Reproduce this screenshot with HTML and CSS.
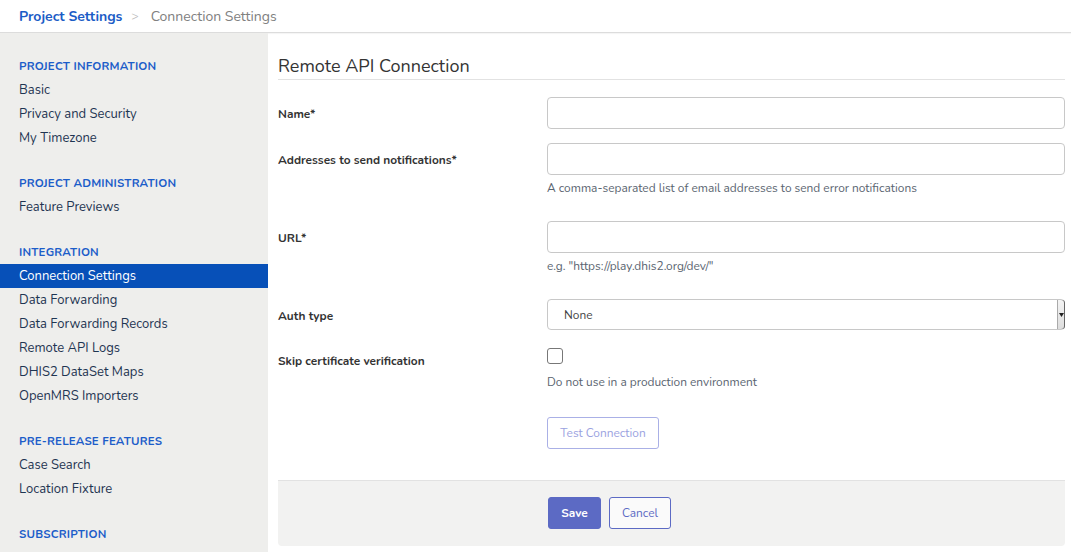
FILE: index.html
```html
<!DOCTYPE html>
<html>
<head>
<meta charset="utf-8">
<link rel="stylesheet" href="styles.css">
</head>
<body>
<header class="topbar">
  <a class="crumb-root">Project Settings</a>
  <span class="crumb-sep">&gt;</span>
  <span class="crumb-current">Connection Settings</span>
</header>
<div class="layout">
  <nav class="sidebar">
    <div class="nav-section">
      <div class="nav-heading">Project Information</div>
      <a class="nav-item">Basic</a>
      <a class="nav-item">Privacy and Security</a>
      <a class="nav-item">My Timezone</a>
    </div>
    <div class="nav-section">
      <div class="nav-heading">Project Administration</div>
      <a class="nav-item">Feature Previews</a>
    </div>
    <div class="nav-section">
      <div class="nav-heading">Integration</div>
      <a class="nav-item active">Connection Settings</a>
      <a class="nav-item">Data Forwarding</a>
      <a class="nav-item">Data Forwarding Records</a>
      <a class="nav-item">Remote API Logs</a>
      <a class="nav-item">DHIS2 DataSet Maps</a>
      <a class="nav-item">OpenMRS Importers</a>
    </div>
    <div class="nav-section">
      <div class="nav-heading">Pre-release Features</div>
      <a class="nav-item">Case Search</a>
      <a class="nav-item">Location Fixture</a>
    </div>
    <div class="nav-section">
      <div class="nav-heading">Subscription</div>
    </div>
  </nav>
  <main class="content">
    <h2 class="legend">Remote API Connection</h2>
    <div class="form-row">
      <label class="form-label">Name*</label>
      <div class="form-field"><input class="text-input" type="text"></div>
    </div>
    <div class="form-row">
      <label class="form-label">Addresses to send notifications*</label>
      <div class="form-field">
        <input class="text-input" type="text">
        <div class="help">A comma-separated list of email addresses to send error notifications</div>
      </div>
    </div>
    <div class="form-row">
      <label class="form-label">URL*</label>
      <div class="form-field">
        <input class="text-input" type="text">
        <div class="help">e.g. "https://play.dhis2.org/dev/"</div>
      </div>
    </div>
    <div class="form-row">
      <label class="form-label">Auth type</label>
      <div class="form-field">
        <div class="select">
          <span class="select-value">None</span>
          <span class="select-arrow"><svg width="5" height="4" viewBox="0 0 5 4"><path d="M0 0H5L2.5 4Z" fill="#222"/></svg></span>
        </div>
      </div>
    </div>
    <div class="form-row row-check">
      <label class="form-label">Skip certificate verification</label>
      <div class="form-field">
        <span class="checkbox"></span>
        <div class="help help-check">Do not use in a production environment</div>
      </div>
    </div>
    <div class="form-row row-test">
      <div class="form-label"></div>
      <div class="form-field"><button class="btn btn-outline-muted">Test Connection</button></div>
    </div>
    <div class="form-actions">
      <div class="form-label"></div>
      <div class="actions-buttons">
        <button class="btn btn-primary">Save</button>
        <button class="btn btn-outline">Cancel</button>
      </div>
    </div>
  </main>
</div>
</body>
</html>
```
FILE: styles.css
```css
* { box-sizing: border-box; }
html, body { margin: 0; padding: 0; }
body {
  font-family: "Nunito", "Lato", "Noto Sans", sans-serif;
  color: #333;
  background: #fff;
  width: 1071px;
  height: 552px;
  overflow: hidden;
}
.topbar {
  height: 33px;
  border-bottom: 1px solid #dcdcdc;
  display: flex;
  align-items: center;
  padding: 0 19px;
  font-size: 14px;
  box-shadow: 0 1px 1px rgba(0,0,0,0.04);
}
.crumb-root { color: #1b5cc6; font-weight: 700; }
.crumb-sep { color: #bbb; margin: 0 12px 0 9px; font-size: 12px; }
.crumb-current { color: #808080; }
.layout { display: flex; height: 519px; }
.sidebar {
  width: 268px;
  flex: none;
  background: #eeeeec;
  padding-top: 21px;
}
.nav-section { margin-bottom: 21px; }
.nav-heading {
  height: 24px;
  line-height: 24px;
  padding-left: 19px;
  font-size: 11.5px;
  font-weight: 700;
  text-transform: uppercase;
  color: #1c5dc9;
  letter-spacing: 0.2px;
}
.nav-item {
  display: block;
  height: 24px;
  line-height: 25px;
  padding-left: 19px;
  font-size: 13px;
  color: #1f3552;
}
.nav-item.active { background: #0750b8; color: #fff; }
.content {
  flex: 1;
  padding: 22px 6px 0 10px;
}
.legend {
  margin: 0;
  font-size: 18px;
  font-weight: 400;
  color: #333;
  line-height: 22px;
  padding-bottom: 2px;
  border-bottom: 1px solid #e2e2e2;
  margin-bottom: 17px;
}
.form-row { display: flex; margin-bottom: 14px; }
.form-label {
  width: 269px;
  flex: none;
  font-size: 11.9px;
  font-weight: 700;
  color: #333;
  height: 32px;
  line-height: 30px;
  padding-top: 2px;
}
.form-field { flex: 1; }
.text-input {
  display: block;
  width: 100%;
  height: 32px;
  border: 1px solid #c8c8c8;
  border-radius: 4px;
  background: #fff;
  margin: 0;
}
.help {
  font-size: 11.9px;
  color: #5a6470;
  margin-top: 5px;
  line-height: 17px;
  margin-bottom: 10px;
}
.select {
  height: 31px;
  border: 1px solid #c8c8c8;
  border-radius: 4px;
  display: flex;
  align-items: center;
  justify-content: space-between;
  font-size: 11.9px;
  color: #444;
  padding-left: 16px;
}
.select-arrow {
  width: 8px;
  height: 29px;
  border-left: 1px solid #aaa;
  background: linear-gradient(#f4f4f4, #ddd);
  display: flex;
  align-items: center;
  justify-content: center;
  border-radius: 0 3px 3px 0;
  margin-right: -1px;
  box-shadow: inset -1px 0 0 #666;
}
.row-check .form-label { height: auto; line-height: 16px; padding-top: 8px; }
.row-check { margin-bottom: 26px; }
.checkbox {
  display: block;
  width: 16px;
  height: 16px;
  border: 1px solid #777;
  border-radius: 3px;
  margin-top: 3px;
}
.help-check { margin-top: 10px; margin-bottom: 0; }
.btn {
  font-family: inherit;
  font-size: 11.9px;
  border-radius: 3px;
  cursor: pointer;
}
.btn-outline-muted {
  height: 32px;
  padding: 0 12px;
  width: 112px;
  background: #fff;
  border: 1px solid #aab0e6;
  color: #9aa2df;
}
.row-test { margin-bottom: 31px; }
.row-test .form-label { height: auto; }
.form-actions {
  display: flex;
  background: #f2f2f1;
  border-top: 1px solid #e2e2e2;
  border-radius: 0 0 4px 4px;
  padding: 16px 0 16px 0;
  height: 66px;
}
.form-actions .form-label { width: 270px; height: auto; }
.actions-buttons { display: flex; gap: 8px; }
.btn-primary {
  height: 32px;
  width: 53px;
  padding: 0;
  background: #5c6ac4;
  border: 1px solid #5c6ac4;
  color: #fff;
  font-weight: 700;
}
.btn-outline {
  height: 32px;
  width: 62px;
  padding: 0;
  background: #fafafa;
  border: 1px solid #5c6ac4;
  color: #5c6ac4;
}
```
